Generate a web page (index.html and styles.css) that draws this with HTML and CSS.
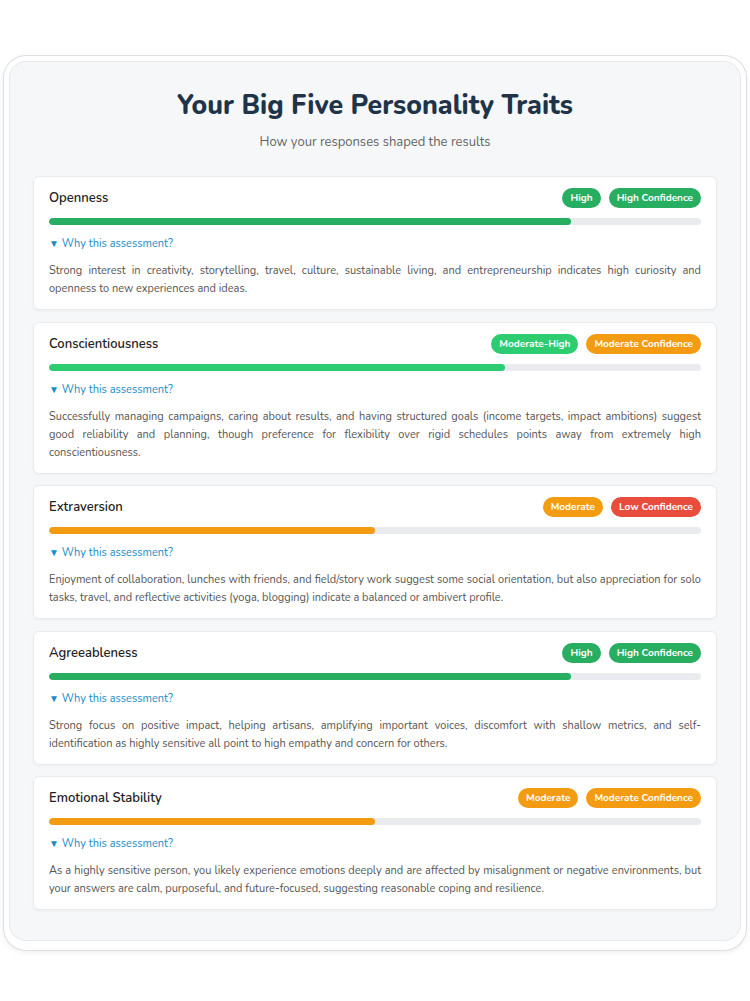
FILE: index.html
```html
<!DOCTYPE html>
<html lang="en">
<head>
    <meta charset="UTF-8">
    <meta name="viewport" content="width=device-width, initial-scale=1.0">
    <title>Big Five Personality Traits</title>
    <link rel="stylesheet" href="styles.css">
</head>
<body>
    <div class="frame">
        <div class="results">
            <div class="header">
                <h1>Your Big Five Personality Traits</h1>
                <p>How your responses shaped the results</p>
            </div>

            <div class="trait">
                <div class="trait-head">
                    <h3>Openness</h3>
                    <div class="badges">
                        <span class="badge green">High</span>
                        <span class="badge green">High Confidence</span>
                    </div>
                </div>
                <div class="bar"><div class="fill green" style="width: 80%;"></div></div>
                <div class="why"><span class="arrow">&#9660;</span> Why this assessment?</div>
                <p class="reason">Strong interest in creativity, storytelling, travel, culture, sustainable living, and entrepreneurship indicates high curiosity and openness to new experiences and ideas.</p>
            </div>

            <div class="trait">
                <div class="trait-head">
                    <h3>Conscientiousness</h3>
                    <div class="badges">
                        <span class="badge light-green">Moderate-High</span>
                        <span class="badge orange">Moderate Confidence</span>
                    </div>
                </div>
                <div class="bar"><div class="fill light-green" style="width: 70%;"></div></div>
                <div class="why"><span class="arrow">&#9660;</span> Why this assessment?</div>
                <p class="reason">Successfully managing campaigns, caring about results, and having structured goals (income targets, impact ambitions) suggest good reliability and planning, though preference for flexibility over rigid schedules points away from extremely high conscientiousness.</p>
            </div>

            <div class="trait">
                <div class="trait-head">
                    <h3>Extraversion</h3>
                    <div class="badges">
                        <span class="badge orange">Moderate</span>
                        <span class="badge red">Low Confidence</span>
                    </div>
                </div>
                <div class="bar"><div class="fill orange" style="width: 50%;"></div></div>
                <div class="why"><span class="arrow">&#9660;</span> Why this assessment?</div>
                <p class="reason">Enjoyment of collaboration, lunches with friends, and field/story work suggest some social orientation, but also appreciation for solo tasks, travel, and reflective activities (yoga, blogging) indicate a balanced or ambivert profile.</p>
            </div>

            <div class="trait">
                <div class="trait-head">
                    <h3>Agreeableness</h3>
                    <div class="badges">
                        <span class="badge green">High</span>
                        <span class="badge green">High Confidence</span>
                    </div>
                </div>
                <div class="bar"><div class="fill green" style="width: 80%;"></div></div>
                <div class="why"><span class="arrow">&#9660;</span> Why this assessment?</div>
                <p class="reason">Strong focus on positive impact, helping artisans, amplifying important voices, discomfort with shallow metrics, and self-identification as highly sensitive all point to high empathy and concern for others.</p>
            </div>

            <div class="trait">
                <div class="trait-head">
                    <h3>Emotional Stability</h3>
                    <div class="badges">
                        <span class="badge orange">Moderate</span>
                        <span class="badge orange">Moderate Confidence</span>
                    </div>
                </div>
                <div class="bar"><div class="fill orange" style="width: 50%;"></div></div>
                <div class="why"><span class="arrow">&#9660;</span> Why this assessment?</div>
                <p class="reason">As a highly sensitive person, you likely experience emotions deeply and are affected by misalignment or negative environments, but your answers are calm, purposeful, and future-focused, suggesting reasonable coping and resilience.</p>
            </div>
        </div>
    </div>
</body>
</html>
```

FILE: styles.css
```css
* {
    margin: 0;
    padding: 0;
    box-sizing: border-box;
}

body {
    font-family: Nunito, Lato, 'Open Sans', sans-serif;
    background: white;
    padding: 56px 4px 40px;
}

.frame {
    background: white;
    padding: 5px 5px 9px;
    border-radius: 22px;
    box-shadow: 0 0 0 1px #dcdfe3, 0 2px 6px rgba(0,0,0,0.08);
}

.results {
    background: #f5f7f9;
    border: 1px solid #e6e9ec;
    border-radius: 17px;
    padding: 25px 23px 30px;
}

.header {
    text-align: center;
    margin-bottom: 24px;
}

.header h1 {
    font-size: 26.7px;
    line-height: 36px;
    font-weight: 800;
    color: #1f3449;
    margin-bottom: 9px;
}

.header p {
    font-size: 13px;
    line-height: 20px;
    color: #666;
}

.trait {
    background: white;
    border: 1px solid #e8ebee;
    border-radius: 6px;
    box-shadow: 0 1px 3px rgba(0,0,0,0.04);
    padding: 11px 15px 11px;
    margin-bottom: 11.5px;
}

.trait:last-child {
    margin-bottom: 0;
}

.trait-head {
    display: flex;
    justify-content: space-between;
    align-items: center;
    height: 20px;
}

.trait-head h3 {
    font-size: 13px;
    line-height: 20px;
    font-weight: 600;
    color: #222;
}

.badges {
    display: flex;
    gap: 8px;
}

.badge {
    color: white;
    font-size: 10px;
    font-weight: 700;
    line-height: 20px;
    height: 20px;
    padding: 0 8px;
    border-radius: 10px;
}

.badge.green { background: #27ae60; }
.badge.light-green { background: #2ecc71; }
.badge.orange { background: #f39c12; }
.badge.red { background: #e74c3c; }

.bar {
    height: 7px;
    background: #e9ebee;
    border-radius: 4px;
    margin-top: 10px;
    overflow: hidden;
}

.fill {
    height: 100%;
    border-radius: 4px;
}

.fill.green { background: #27ae60; }
.fill.light-green { background: #2ecc71; }
.fill.orange { background: #f39c12; }

.why {
    color: #1a8bc7;
    font-size: 11px;
    line-height: 16px;
    height: 16px;
    margin-top: 11px;
}

.why .arrow {
    font-size: 10px;
}

.reason {
    color: #555;
    font-size: 11px;
    line-height: 18px;
    text-align: justify;
    margin-top: 10px;
}
```
